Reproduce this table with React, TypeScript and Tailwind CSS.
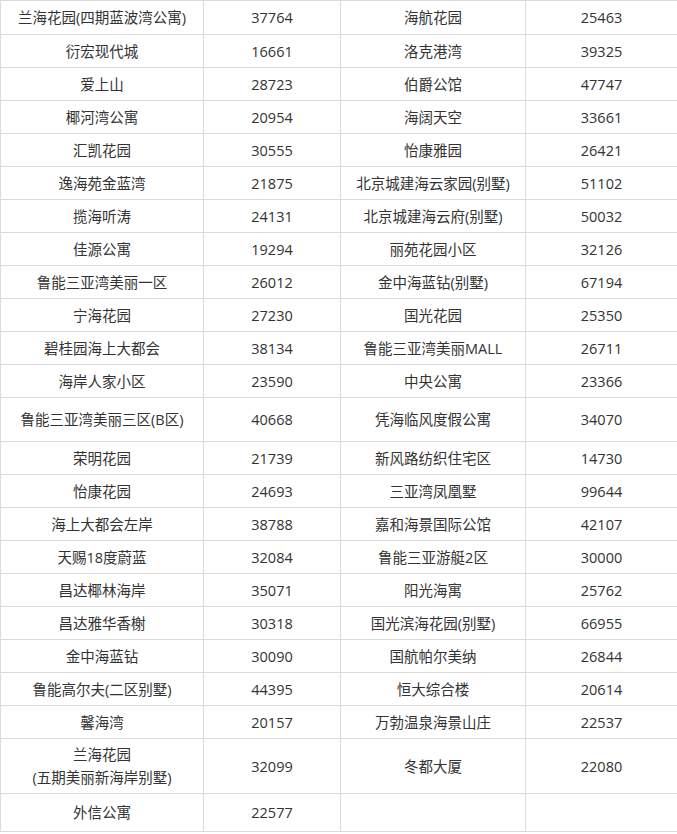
import React from "react";

type Row = { a: string; av: string; b: string; bv: string; h: string };

const rows: Row[] = [
  { a: "兰海花园(四期蓝波湾公寓)", av: "37764", b: "海航花园", bv: "25463", h: "h-[34px]" },
  { a: "衍宏现代城", av: "16661", b: "洛克港湾", bv: "39325", h: "h-[33px]" },
  { a: "爱上山", av: "28723", b: "伯爵公馆", bv: "47747", h: "h-[33px]" },
  { a: "椰河湾公寓", av: "20954", b: "海阔天空", bv: "33661", h: "h-[33px]" },
  { a: "汇凯花园", av: "30555", b: "怡康雅园", bv: "26421", h: "h-[33px]" },
  { a: "逸海苑金蓝湾", av: "21875", b: "北京城建海云家园(别墅)", bv: "51102", h: "h-[33px]" },
  { a: "揽海听涛", av: "24131", b: "北京城建海云府(别墅)", bv: "50032", h: "h-[33px]" },
  { a: "佳源公寓", av: "19294", b: "丽苑花园小区", bv: "32126", h: "h-[33px]" },
  { a: "鲁能三亚湾美丽一区", av: "26012", b: "金中海蓝钻(别墅)", bv: "67194", h: "h-[33px]" },
  { a: "宁海花园", av: "27230", b: "国光花园", bv: "25350", h: "h-[33px]" },
  { a: "碧桂园海上大都会", av: "38134", b: "鲁能三亚湾美丽MALL", bv: "26711", h: "h-[33px]" },
  { a: "海岸人家小区", av: "23590", b: "中央公寓", bv: "23366", h: "h-[33px]" },
  { a: "鲁能三亚湾美丽三区(B区)", av: "40668", b: "凭海临风度假公寓", bv: "34070", h: "h-[44px]" },
  { a: "荣明花园", av: "21739", b: "新风路纺织住宅区", bv: "14730", h: "h-[33px]" },
  { a: "怡康花园", av: "24693", b: "三亚湾凤凰墅", bv: "99644", h: "h-[33px]" },
  { a: "海上大都会左岸", av: "38788", b: "嘉和海景国际公馆", bv: "42107", h: "h-[33px]" },
  { a: "天赐18度蔚蓝", av: "32084", b: "鲁能三亚游艇2区", bv: "30000", h: "h-[33px]" },
  { a: "昌达椰林海岸", av: "35071", b: "阳光海寓", bv: "25762", h: "h-[33px]" },
  { a: "昌达雅华香榭", av: "30318", b: "国光滨海花园(别墅)", bv: "66955", h: "h-[33px]" },
  { a: "金中海蓝钻", av: "30090", b: "国航帕尔美纳", bv: "26844", h: "h-[33px]" },
  { a: "鲁能高尔夫(二区别墅)", av: "44395", b: "恒大综合楼", bv: "20614", h: "h-[33px]" },
  { a: "馨海湾", av: "20157", b: "万勃温泉海景山庄", bv: "22537", h: "h-[33px]" },
  { a: "兰海花园\n(五期美丽新海岸别墅)", av: "32099", b: "冬都大厦", bv: "22080", h: "h-[55px]" },
  { a: "外信公寓", av: "22577", b: "", bv: "", h: "h-[38px]" },
];

export default function App() {
  const td = "border border-[#dcdcdc] text-center align-middle p-0 leading-[23px]";
  return (
    <div
      className="w-[677px] bg-white text-[#333333] text-[14.5px]"
      style={{ fontFamily: '"Open Sans", "Noto Sans CJK SC", sans-serif' }}
    >
      <table className="w-[677px] table-fixed border-collapse">
        <colgroup>
          <col className="w-[203px]" />
          <col className="w-[137px]" />
          <col className="w-[185px]" />
          <col className="w-[152px]" />
        </colgroup>
        <tbody>
          {rows.map((r, i) => (
            <tr key={i} className={r.h}>
              <td className={td}>
                {r.a.split("\n").map((line, j) => (
                  <div key={j}>{line}</div>
                ))}
              </td>
              <td className={td}>{r.av}</td>
              <td className={td}>{r.b}</td>
              <td className={td}>{r.bv}</td>
            </tr>
          ))}
        </tbody>
      </table>
    </div>
  );
}
